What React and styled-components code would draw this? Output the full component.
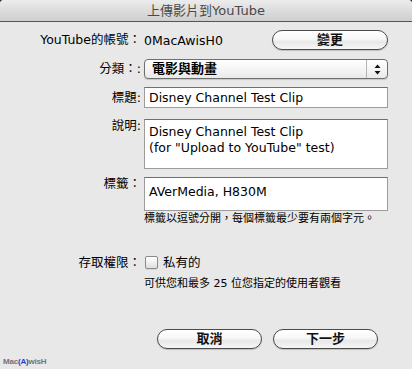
import React from "react";
import styled, { createGlobalStyle } from "styled-components";

const Global = createGlobalStyle`
  html, body { margin: 0; padding: 0; background: #2a2a2a; }
  body { width: 412px; height: 369px; overflow: hidden; }
  * { box-sizing: border-box; }
`;

const FONT = `"DejaVu Sans", "Noto Sans CJK TC", sans-serif`;

const Window = styled.div`
  width: 412px;
  height: 369px;
  background: #e8e8e8;
  border-radius: 4px 4px 0 0;
  overflow: hidden;
  display: flex;
  flex-direction: column;
  font-family: ${FONT};
  font-size: 12.5px;
  color: #000;
`;

const TitleBar = styled.div`
  height: 22px;
  flex: none;
  border-bottom: 1px solid #555;
  background: linear-gradient(to bottom, #ececec 0%, #dcdcdc 50%, #cfcfcf 100%);
  text-align: center;
  line-height: 21px;
  font-size: 13px;
  color: #4a4a4a;
`;

const Row = styled.div`
  display: grid;
  grid-template-columns: 141px 244px;
  column-gap: 3px;
  margin-top: ${(p) => p.$mt}px;
  align-items: ${(p) => (p.$top ? "start" : "center")};
`;

const Label = styled.div`
  text-align: right;
  white-space: nowrap;
  line-height: 14px;
`;

const ValueLine = styled.div`
  display: flex;
  align-items: center;
  justify-content: space-between;
`;

const Pill = styled.button`
  width: ${(p) => p.$w}px;
  height: 20px;
  border: 1px solid #4a4a4a;
  border-radius: 10px;
  background: linear-gradient(to bottom, #ffffff 0%, #f7f7f7 45%, #e8e8e8 60%, #f6f6f6 100%);
  box-shadow: 0 1px 1px rgba(0, 0, 0, 0.18);
  font-family: ${FONT};
  font-size: 13px;
  font-weight: 600;
  color: #111;
  padding: 0;
  line-height: 18px;
`;

const Popup = styled.div`
  height: 20px;
  border: 1px solid #6e6e6e;
  border-radius: 4px;
  background: linear-gradient(to bottom, #ffffff 0%, #f5f5f5 50%, #e9e9e9 100%);
  box-shadow: 0 1px 1px rgba(0, 0, 0, 0.15);
  display: flex;
  align-items: stretch;
`;

const PopupText = styled.div`
  flex: 1;
  padding-left: 7px;
  line-height: 18px;
  font-size: 13px;
  font-weight: 600;
`;

const PopupArrows = styled.div`
  width: 21px;
  border-left: 1px solid #b4b4b4;
  display: flex;
  align-items: center;
  justify-content: center;
`;

const Field = styled.input`
  width: 244px;
  height: 21px;
  border: 1px solid #9c9c9c;
  border-top-color: #6f6f6f;
  background: #fff;
  padding: 0 4px;
  font-family: ${FONT};
  font-size: 12.5px;
  color: #000;
  outline: none;
`;

const Area = styled.textarea`
  width: 244px;
  height: ${(p) => p.$h}px;
  border: 1px solid #9c9c9c;
  border-top-color: #6f6f6f;
  background: #fff;
  padding: ${(p) => p.$pt}px 4px 0 4px;
  font-family: ${FONT};
  font-size: 12.5px;
  line-height: 16px;
  color: #000;
  resize: none;
  overflow: hidden;
  outline: none;
  display: block;
`;

const Hint = styled.div`
  margin-top: ${(p) => p.$mt}px;
  padding-left: 144px;
  font-size: 11px;
  line-height: 12px;
  white-space: nowrap;
`;

const CheckLine = styled.label`
  display: flex;
  align-items: center;
  gap: 5px;
  line-height: 15px;
`;

const Box = styled.span`
  width: 13px;
  height: 13px;
  margin-left: 1px;
  border: 1px solid #8a8a8a;
  border-radius: 2px;
  background: linear-gradient(to bottom, #ffffff 0%, #f0f0f0 50%, #dedede 100%);
  box-shadow: 0 1px 0 rgba(0, 0, 0, 0.08);
`;

const ButtonBar = styled.div`
  margin-top: ${(p) => p.$mt}px;
  display: flex;
  justify-content: flex-end;
  gap: 11px;
  padding-right: 34px;
`;

const Watermark = styled.div`
  margin-top: 8px;
  padding-left: 3px;
  font-family: "Liberation Sans", sans-serif;
  font-size: 8px;
  font-weight: bold;
  line-height: 9px;
  letter-spacing: -0.2px;
  color: #737373;
`;

const Blue = styled.span`
  color: #1f3fcf;
`;

export default function App() {
  return (
    <>
      <Global />
      <Window>
        <TitleBar>上傳影片到YouTube</TitleBar>

        <Row $mt={8}>
          <Label>YouTube的帳號：</Label>
          <ValueLine>
            <span>0MacAwisH0</span>
            <Pill $w={116}>變更</Pill>
          </ValueLine>
        </Row>

        <Row $mt={9}>
          <Label>分類：:</Label>
          <Popup>
            <PopupText>電影與動畫</PopupText>
            <PopupArrows>
              <svg width="7" height="11" viewBox="0 0 7 11">
                <path d="M3.5 0.5 L6.5 4 L0.5 4 Z" fill="#111" />
                <path d="M3.5 10.5 L6.5 7 L0.5 7 Z" fill="#111" />
              </svg>
            </PopupArrows>
          </Popup>
        </Row>

        <Row $mt={8}>
          <Label>標題:</Label>
          <Field readOnly defaultValue="Disney Channel Test Clip" />
        </Row>

        <Row $mt={11} $top>
          <Label>說明:</Label>
          <Area
            $h={50}
            $pt={4}
            readOnly
            defaultValue={'Disney Channel Test Clip\n(for "Upload to YouTube" test)'}
          />
        </Row>

        <Row $mt={8} $top>
          <Label>標籤：</Label>
          <Area $h={34} $pt={6} readOnly defaultValue="AVerMedia, H830M" />
        </Row>

        <Hint $mt={2}>標籤以逗號分開，每個標籤最少要有兩個字元。</Hint>

        <Row $mt={30}>
          <Label>存取權限：</Label>
          <CheckLine>
            <Box />
            <span>私有的</span>
          </CheckLine>
        </Row>

        <Hint $mt={8}>可供您和最多 25 位您指定的使用者觀看</Hint>

        <ButtonBar $mt={39}>
          <Pill $w={105}>取消</Pill>
          <Pill $w={105}>下一步</Pill>
        </ButtonBar>

        <Watermark>
          Mac<Blue>(A)</Blue>wisH
        </Watermark>
      </Window>
    </>
  );
}
